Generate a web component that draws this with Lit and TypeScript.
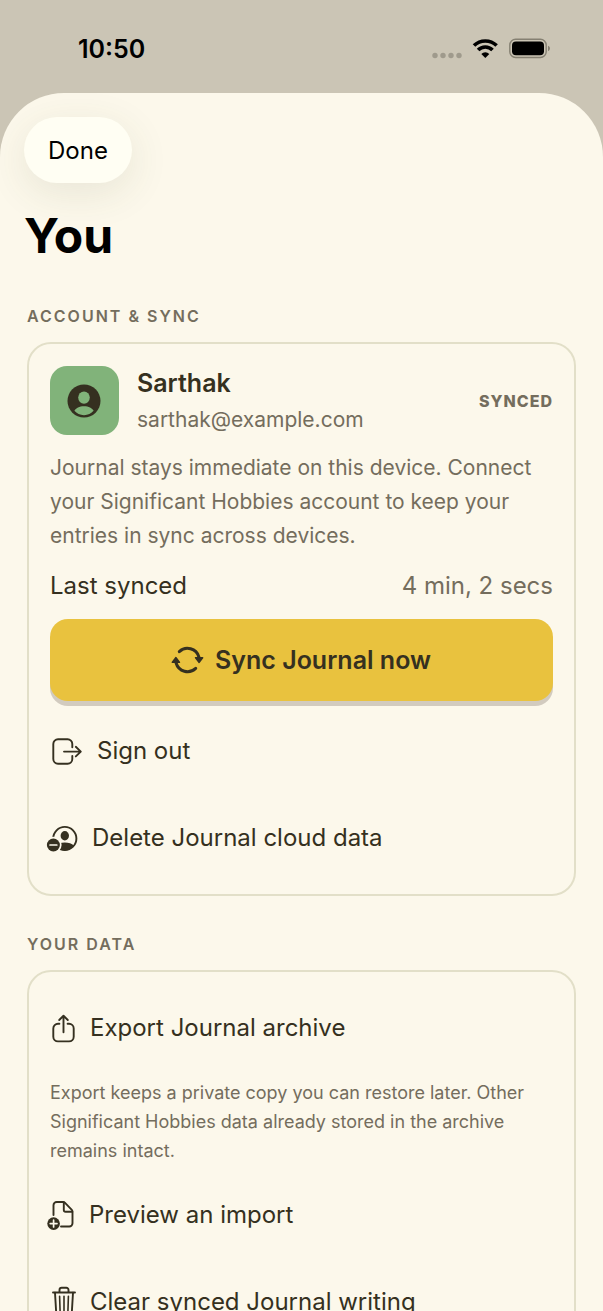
import { LitElement, html, svg, css, type SVGTemplateResult } from "lit";
import { customElement, property } from "lit/decorators.js";

interface Glyph {
  width: number;
  art: SVGTemplateResult;
}

// Every glyph is 34 units tall; badges may hang past the left edge.
const GLYPHS: Record<string, Glyph> = {
  sync: {
    width: 31,
    art: svg`
      <g transform="translate(-1.5 0)">
        <path class="line heavy" d="M8.8 8.6A11.9 11.9 0 0 1 28.4 14" />
        <path class="line heavy" d="M25.2 25.4A11.9 11.9 0 0 1 5.6 20" />
        <path class="fill round" d="M25.2 14.8h6.8l-3.4 4.4zM2 19.2h6.8l-3.4-4.400z" />
      </g>`,
  },
  signOut: {
    width: 34,
    art: svg`
      <path class="line" d="M22.3 13.2V10a4.7 4.7 0 0 0-4.7-4.7H8A4.7 4.7 0 0 0 3.3 10v15A4.7 4.7 0 0 0 8 29.7h9.6a4.7 4.7 0 0 0 4.7-4.7v-3" />
      <path class="line" d="M14 17.6h16.6M25.8 12.8l5 4.8-5 4.8" />`,
  },
  deleteCloud: {
    width: 29,
    art: svg`
      <circle class="line" cx="14.8" cy="17.5" r="11.6" />
      <ellipse class="fill" cx="14.8" cy="14.8" rx="4.2" ry="4.7" />
      <path class="fill" d="M5.8 24.6c2-2 5-3.2 9-3.2s7 1.2 9 3.2c-2 3-5.4 4.9-9 4.9s-7-1.9-9-4.9z" />
      <circle class="gap" cx="3.4" cy="24" r="8.2" />
      <circle class="fill" cx="3.4" cy="24" r="6.5" />
      <path class="cut" d="M0 24h6.8" />`,
  },
  share: {
    width: 27,
    art: svg`
      <path class="line" d="M9.4 12.7H8A4.7 4.7 0 0 0 3.3 17.4v8.3A4.7 4.7 0 0 0 8 30.4h11a4.7 4.7 0 0 0 4.7-4.7v-8.3a4.7 4.7 0 0 0-4.7-4.7h-1.4" />
      <path class="line" d="M13.5 21.3V5M9.2 9l4.3-4.2L17.8 9" />`,
  },
  importFile: {
    width: 26,
    art: svg`
      <path class="line" d="M3.5 17V7.2A3.2 3.2 0 0 1 6.7 4H13a2.5 2.5 0 0 1 1.8.7l7 7.2a2.5 2.5 0 0 1 .7 1.8v11.6a3.2 3.2 0 0 1-3.2 3.2H11" />
      <path class="line" d="M13.8 4.3v7.6a1.8 1.8 0 0 0 1.8 1.8h6.7" />
      <circle class="fill" cx="3.6" cy="25.6" r="6.3" />
      <path class="cut" d="M.2 25.6h6.8M3.6 22.2v6.8" />`,
  },
  trash: {
    width: 27,
    art: svg`
      <path class="line" d="M3 7.5h22M9.5 7.2V5A2.2 2.2 0 0 1 11.7 2.8h4.6A2.2 2.2 0 0 1 18.5 5v2.2" />
      <path class="line" d="M5 7.8l1.2 20a3 3 0 0 0 3 2.8h9.6a3 3 0 0 0 3-2.8l1.2-20" />
      <path class="line thin" d="M9.6 11.3l.5 15.5M14 11.3v15.5M18.4 11.3l-.5 15.5" />`,
  },
};

@customElement("line-icon")
class LineIcon extends LitElement {
  @property() name = "sync";

  static styles = css`
    :host { display: block; flex: none; }
    .icon { display: block; overflow: visible; }
    .line { fill: none; stroke: currentColor; stroke-width: 1.9; stroke-linecap: round; stroke-linejoin: round; }
    .heavy { stroke-width: 3; }
    .thin { stroke-width: 1.6; }
    .fill { fill: currentColor; }
    .round { stroke: currentColor; stroke-width: 1.8; stroke-linejoin: round; }
    .gap { fill: var(--paper); }
    .cut { fill: none; stroke: var(--paper); stroke-width: 1.7; stroke-linecap: round; }
  `;

  render() {
    const { width, art } = GLYPHS[this.name];
    return html`<svg class="icon" width=${width} height="34" viewBox="0 0 ${width} 34" aria-hidden="true">${art}</svg>`;
  }
}

@customElement("status-bar")
class StatusBar extends LitElement {
  static styles = css`
    :host { display: flex; justify-content: space-between; align-items: center; padding: 33px 53px 28px 78px; color: #000; }
    .time { font-size: 25px; line-height: 32px; font-weight: 600; }
    .signals { display: block; }
  `;

  render() {
    return html`
      <time class="time">10:50</time>
      <svg class="signals" width="118" height="32" viewBox="0 1 118 32" role="img" aria-label="Wi-Fi on, battery full">
        <g fill="#9f9a8c">
          <circle cx="3" cy="23.5" r="2.7" /><circle cx="11" cy="23.5" r="2.7" />
          <circle cx="19" cy="23.5" r="2.7" /><circle cx="27" cy="23.5" r="2.7" />
        </g>
        <g fill="none" stroke="#000" stroke-width="3.6">
          <path d="M42 13.6A16 16 0 0 1 64.6 13.6" />
          <path d="M46.1 18.1A10 10 0 0 1 60.5 18.1" />
        </g>
        <path d="M53.3 26l-4-4a5.7 5.7 0 0 1 8 0z" />
        <rect x="77.8" y="7.3" width="36.4" height="18.2" rx="5.8" fill="none" stroke="#858072" stroke-width="1.4" />
        <rect x="80" y="9.5" width="32" height="13.8" rx="4" />
        <path d="M116 13.800c2.600 1 2.600 4.200 0 5.200z" fill="#858072" />
      </svg>`;
  }
}

@customElement("action-row")
class ActionRow extends LitElement {
  @property() icon = "";
  @property() label = "";

  static styles = css`
    :host { display: block; }
    .action { display: flex; align-items: center; gap: 13px; width: 100%; min-height: 68px; padding: 0; border: 0; background: none; color: inherit; font: inherit; font-size: 24px; line-height: 32px; text-align: left; cursor: pointer; }
  `;

  render() {
    return html`<button class="action" type="button"><line-icon .name=${this.icon}></line-icon><span>${this.label}</span></button>`;
  }
}

@customElement("app-root")
class AppRoot extends LitElement {
  static styles = css`
    :host {
      --paper: #fcf8eb;
      --ink: #353020;
      --muted: #746d5d;
      display: flex;
      flex-direction: column;
      height: 100vh;
      background: #cbc5b5;
      color: var(--ink);
      font-family: Inter, "Liberation Sans", sans-serif;
    }
    .sheet { flex: 1; min-height: 0; box-sizing: border-box; overflow-y: auto; scrollbar-width: none; padding: 24px 27px; border-radius: 64px 64px 0 0; background: var(--paper); }
    .done { display: block; margin-left: -3px; height: 66px; padding: 0 24px; border: 0; border-radius: 33px; background: #fffef3; box-shadow: 0 10px 40px rgb(70 80 50 / 0.11); color: #000; font: inherit; font-size: 24px; cursor: pointer; }
    .title { margin: 23px 0 40px -3px; color: #000; font-size: 48px; line-height: 60px; font-weight: 700; }
    .section { margin-bottom: 38px; }
    .heading { margin: 0 0 16px; color: var(--muted); font-size: 16px; line-height: 20px; font-weight: 600; letter-spacing: 2px; }
    .card { display: flex; flex-direction: column; gap: 16px; padding: 22px 21px; border: 2px solid #e2dfc8; border-radius: 24px; }
    .account { display: flex; align-items: center; gap: 18px; }
    .avatar { display: block; flex: none; width: 69px; height: 69px; border-radius: 17px; background: #81b37a; }
    .identity { flex: 1; min-width: 0; margin-bottom: -5px; }
    .name { margin: 0; font-size: 25px; line-height: 34px; font-weight: 600; }
    .email { margin: 0; color: var(--muted); font-size: 21px; line-height: 40px; }
    .badge { color: var(--muted); font-size: 16px; line-height: 20px; font-weight: 800; letter-spacing: 1px; }
    .about { margin: 0; color: var(--muted); font-size: 21px; line-height: 34px; }
    .last { display: flex; justify-content: space-between; margin: 0; font-size: 24px; line-height: 34px; }
    .when { margin: 0; color: var(--muted); }
    .sync { display: flex; justify-content: center; align-items: center; gap: 12px; min-height: 82px; padding: 0; border: 0; border-radius: 18px; background: #e9c23e; box-shadow: 0 5px 0 #d2cbbf; color: var(--ink); font: inherit; font-size: 25px; font-weight: 600; cursor: pointer; }
    .actions { display: flex; flex-direction: column; gap: 19px; }
    .note { margin: 0; color: var(--muted); font-size: 18px; line-height: 29px; }
  `;

  render() {
    return html`
      <status-bar></status-bar>
      <main class="sheet">
        <button class="done" type="button">Done</button>
        <h1 class="title">You</h1>
        <section class="section" aria-labelledby="account">
          <h2 class="heading" id="account">ACCOUNT &amp; SYNC</h2>
          <div class="card">
            <div class="account">
              <svg class="avatar" viewBox="0 0 69 69" aria-hidden="true">
                <circle cx="34" cy="35" r="16.5" fill="#353020" />
                <ellipse cx="34" cy="31.6" rx="5.8" ry="6.2" fill="#81b37a" />
                <path d="M24.4 44.8c1.4-2.7 5-4.5 9.6-4.5s8.2 1.8 9.6 4.5c-2.3 2.8-5.7 4.4-9.6 4.4s-7.3-1.6-9.6-4.4z" fill="#81b37a" />
              </svg>
              <div class="identity">
                <p class="name">Sarthak</p>
                <p class="email">sarthak@example.com</p>
              </div>
              <span class="badge">SYNCED</span>
            </div>
            <p class="about">Journal stays immediate on this device. Connect your Significant Hobbies account to keep your entries in sync across devices.</p>
            <dl class="last"><dt>Last synced</dt><dd class="when">4 min, 2 secs</dd></dl>
            <button class="sync" type="button"><line-icon name="sync"></line-icon><span>Sync Journal now</span></button>
            <div class="actions">
              <action-row icon="signOut" label="Sign out"></action-row>
              <action-row icon="deleteCloud" label="Delete Journal cloud data"></action-row>
            </div>
          </div>
        </section>
        <section class="section" aria-labelledby="data">
          <h2 class="heading" id="data">YOUR DATA</h2>
          <div class="card">
            <action-row icon="share" label="Export Journal archive"></action-row>
            <p class="note">Export keeps a private copy you can restore later. Other Significant Hobbies data already stored in the archive remains intact.</p>
            <div class="actions">
              <action-row icon="importFile" label="Preview an import"></action-row>
              <action-row icon="trash" label="Clear synced Journal writing"></action-row>
            </div>
          </div>
        </section>
      </main>`;
  }
}
